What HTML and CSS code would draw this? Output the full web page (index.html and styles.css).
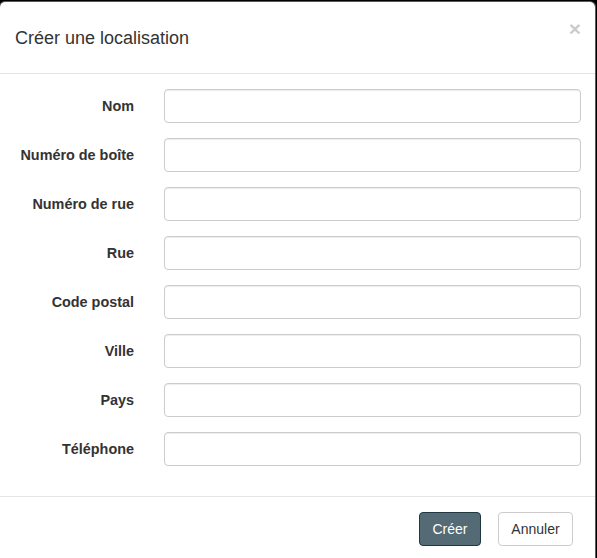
FILE: index.html
```html
<!DOCTYPE html>
<html lang="fr">
<head>
<meta charset="utf-8">
<title>Créer une localisation</title>
<link rel="stylesheet" href="styles.css">
</head>
<body>
<div class="modal-content">
  <div class="modal-header">
    <h4 class="modal-title">Créer une localisation</h4>
    <button type="button" class="close" aria-label="Close">×</button>
  </div>
  <form class="modal-body">
    <div class="form-group"><label class="label">Nom</label><div class="field"><input class="input" type="text"></div></div>
    <div class="form-group"><label class="label">Numéro de boîte</label><div class="field"><input class="input" type="text"></div></div>
    <div class="form-group"><label class="label">Numéro de rue</label><div class="field"><input class="input" type="text"></div></div>
    <div class="form-group"><label class="label">Rue</label><div class="field"><input class="input" type="text"></div></div>
    <div class="form-group"><label class="label">Code postal</label><div class="field"><input class="input" type="text"></div></div>
    <div class="form-group"><label class="label">Ville</label><div class="field"><input class="input" type="text"></div></div>
    <div class="form-group"><label class="label">Pays</label><div class="field"><input class="input" type="text"></div></div>
    <div class="form-group"><label class="label">Téléphone</label><div class="field"><input class="input" type="text"></div></div>
  </form>
  <div class="modal-footer">
    <button type="button" class="btn btn-primary">Créer</button>
    <button type="button" class="btn btn-default">Annuler</button>
  </div>
</div>
</body>
</html>
```
FILE: styles.css
```css
* { box-sizing: border-box; }
html, body {
  margin: 0;
  padding: 0;
  background: #000;
  overflow: hidden;
  height: 558px;
}
body {
  font-family: "Liberation Sans", Arial, Helvetica, sans-serif;
  font-size: 14px;
  line-height: 1.42857;
  color: #333;
}
.modal-content {
  width: 597px;
  margin: 1px 0 0 -1px;
  background: #fff;
  background-clip: padding-box;
  border: 1px solid rgba(255,255,255,0.35);
  border-radius: 6px;
}
.modal-header {
  position: relative;
  padding: 23px 15px 22px;
  border-bottom: 1px solid #e5e5e5;
  height: 72px;
}
.modal-title {
  margin: 0;
  font-size: 18px;
  font-weight: 400;
  line-height: 26px;
  color: #333;
  padding-left: 0;
}
.close {
  position: absolute;
  top: 16px;
  right: 14px;
  padding: 0;
  border: 0;
  background: transparent;
  font-family: "Liberation Sans", Arial, sans-serif;
  font-size: 21px;
  font-weight: 700;
  line-height: 1;
  color: #000;
  opacity: 0.2;
  text-shadow: 0 1px 0 #fff;
  cursor: pointer;
}
.modal-body {
  display: flex;
  flex-direction: column;
  gap: 15px;
  padding: 15px 0 30px;
  margin: 0;
}
.form-group {
  display: grid;
  grid-template-columns: 150px 1fr;
  align-items: center;
  height: 34px;
}
.label {
  text-align: right;
  font-weight: 700;
  font-size: 14.4px;
  padding-right: 16px;
  padding-top: 1px;
  white-space: nowrap;
}
.field {
  padding: 0 14px 0 14px;
}
.input {
  display: block;
  width: 100%;
  height: 34px;
  padding: 6px 12px;
  font-family: inherit;
  font-size: 14px;
  color: #555;
  background: #fff;
  border: 1px solid #ccc;
  border-radius: 4px;
  box-shadow: inset 0 1px 1px rgba(0,0,0,0.075);
}
.modal-footer {
  display: flex;
  justify-content: flex-end;
  gap: 17px;
  padding: 15px 22px 20px 15px;
  border-top: 1px solid #e5e5e5;
}
.btn {
  height: 34px;
  padding: 6px 12px;
  font-family: inherit;
  font-size: 14px;
  line-height: 20px;
  border: 1px solid transparent;
  border-radius: 4px;
  cursor: pointer;
}
.btn-primary {
  width: 62px;
  color: #fff;
  background: #546a74;
  border-color: #1f3842;
}
.btn-default {
  width: 75px;
  color: #333;
  background: #fff;
  border-color: #ccc;
}
```
